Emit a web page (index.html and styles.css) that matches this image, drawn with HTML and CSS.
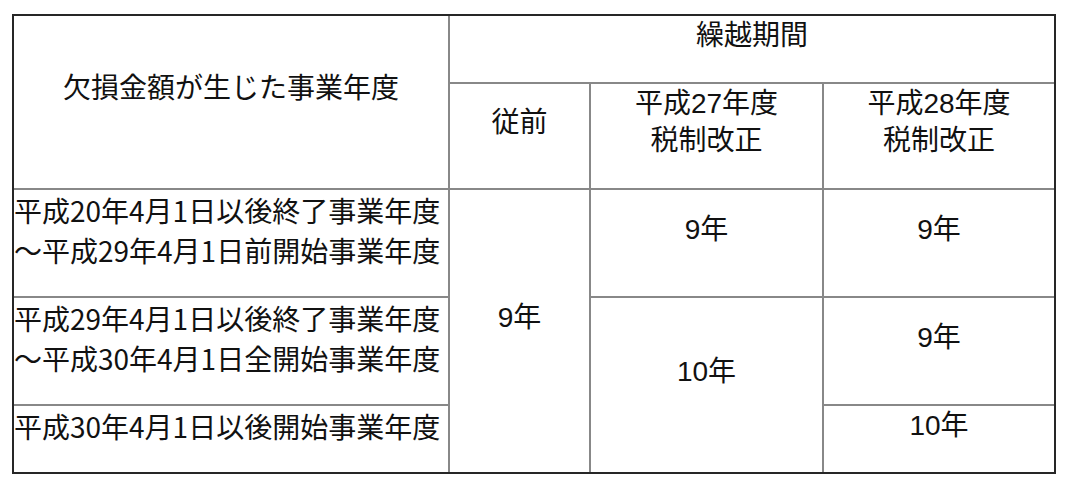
FILE: index.html
```html
<!DOCTYPE html>
<html lang="ja">
<head>
<meta charset="utf-8">
<title>繰越期間</title>
<link rel="stylesheet" href="styles.css">
</head>
<body>
<div class="frame">
  <table class="carry">
    <colgroup>
      <col class="c1"><col class="c2"><col class="c3"><col class="c4">
    </colgroup>
    <tr class="ra">
      <th rowspan="2" class="head">欠損金額が生じた事業年度</th>
      <th colspan="3" class="head">繰越期間</th>
    </tr>
    <tr class="rb">
      <th class="head">従前</th>
      <th class="head">平成27年度<br>税制改正</th>
      <th class="head">平成28年度<br>税制改正</th>
    </tr>
    <tr class="rc">
      <td class="term">平成20年4月1日以後終了事業年度<br>〜平成29年4月1日前開始事業年度</td>
      <td rowspan="3" class="num">9年</td>
      <td class="num">9年</td>
      <td class="num">9年</td>
    </tr>
    <tr class="rd">
      <td class="term">平成29年4月1日以後終了事業年度<br>〜平成30年4月1日全開始事業年度</td>
      <td rowspan="2" class="num">10年</td>
      <td class="num">9年</td>
    </tr>
    <tr class="re">
      <td class="term">平成30年4月1日以後開始事業年度</td>
      <td class="num">10年</td>
    </tr>
  </table>
</div>
</body>
</html>
```

FILE: styles.css
```css
html, body {
  margin: 0;
  padding: 0;
  background: #ffffff;
}

body {
  color: #111111;
  font-family: "Noto Sans CJK JP", sans-serif;
}

.frame {
  margin: 14px 0 0 12px;
  width: 1040px;
  border: 2px solid #262626;
}

.carry {
  width: 1040px;
  border-collapse: collapse;
  border-style: hidden;
  table-layout: fixed;
}

.c1 { width: 435px; }
.c2 { width: 141px; }
.c3 { width: 233px; }
.c4 { width: 231px; }

.carry th,
.carry td {
  border: 2px solid #888888;
  padding: 0;
  vertical-align: middle;
  font-size: 28px;
}

.carry .head {
  font-family: "Liberation Sans", "Noto Sans CJK JP", sans-serif;
  font-weight: normal;
  text-align: center;
  line-height: 37px;
  padding-bottom: 28px;
}

.carry .term {
  text-align: left;
  line-height: 40px;
  padding-bottom: 26px;
  white-space: nowrap;
}

.carry .num {
  font-family: "Liberation Sans", "Noto Sans CJK JP", sans-serif;
  text-align: center;
  line-height: 40px;
  padding-bottom: 26px;
}

.ra { height: 67px; }
.rb { height: 106px; }
.rc { height: 108px; }
.rd { height: 108px; }
.re { height: 67px; }
```
